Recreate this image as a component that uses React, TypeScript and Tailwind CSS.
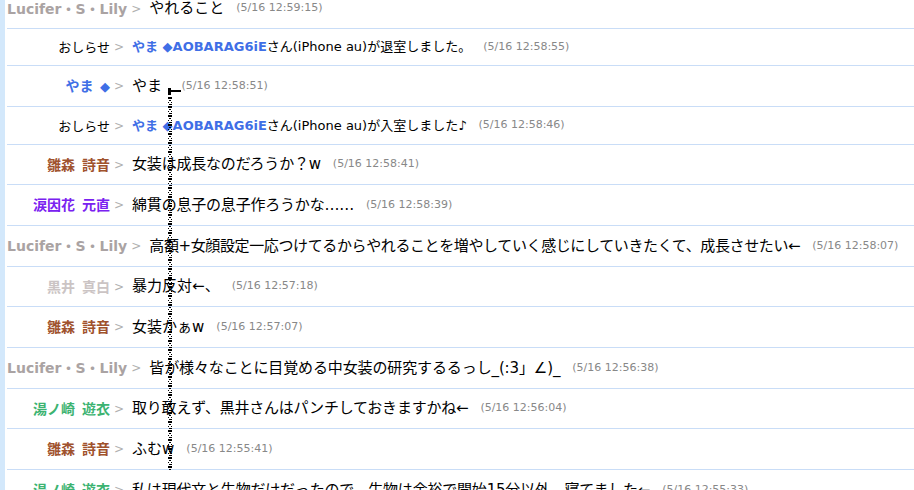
import React from "react";

type Row = {
  h: string;
  name?: string;
  nameColor?: string;
  diamond?: boolean;
  system?: "in" | "out";
  msg?: string;
  track?: string;
  time: string;
};

const rows: Row[] = [
  { h: "h-[40px]", name: "Lucifer・S・Lily", nameColor: "text-[#aaa3a3]", msg: "やれること", track: "tracking-[0px]", time: "(5/16 12:59:15)" },
  { h: "h-[37px]", system: "out", time: "(5/16 12:58:55)" },
  { h: "h-[41px]", name: "やま", nameColor: "text-[#3f6fe6]", diamond: true, msg: "やま\u2002", track: "tracking-[0px]", time: "(5/16 12:58:51)" },
  { h: "h-[38px]", system: "in", time: "(5/16 12:58:46)" },
  { h: "h-[40px]", name: "雛森\u2002詩音", nameColor: "text-[#a0522d]", msg: "女装は成長なのだろうか？w", track: "tracking-[-0.2px]", time: "(5/16 12:58:41)" },
  { h: "h-[41px]", name: "涙因花\u2002元直", nameColor: "text-[#7a22f0]", msg: "綿貫の息子の息子作ろうかな……", track: "tracking-[-0.2px]", time: "(5/16 12:58:39)" },
  { h: "h-[41px]", name: "Lucifer・S・Lily", nameColor: "text-[#aaa3a3]", msg: "高額+女顔設定一応つけてるからやれることを増やしていく感じにしていきたくて、成長させたい←", track: "tracking-[-0.38px]", time: "(5/16 12:58:07)" },
  { h: "h-[40px]", name: "黒井\u2002真白", nameColor: "text-[#cbc4c4]", msg: "暴力反対←、", track: "tracking-[0px]", time: "(5/16 12:57:18)" },
  { h: "h-[41px]", name: "雛森\u2002詩音", nameColor: "text-[#a0522d]", msg: "女装かぁw", track: "tracking-[0px]", time: "(5/16 12:57:07)" },
  { h: "h-[41px]", name: "Lucifer・S・Lily", nameColor: "text-[#aaa3a3]", msg: "皆が様々なことに目覚める中女装の研究するるっし_(:3」∠)_", track: "tracking-[-0.12px]", time: "(5/16 12:56:38)" },
  { h: "h-[40px]", name: "湯ノ崎\u2002遊衣", nameColor: "text-[#3cb371]", msg: "取り敢えず、黒井さんはパンチしておきますかね←", track: "tracking-[-0.22px]", time: "(5/16 12:56:04)" },
  { h: "h-[41px]", name: "雛森\u2002詩音", nameColor: "text-[#a0522d]", msg: "ふむw", track: "tracking-[0px]", time: "(5/16 12:55:41)" },
  { h: "h-[41px]", name: "湯ノ崎\u2002遊衣", nameColor: "text-[#3cb371]", msg: "私は現代文と生物だけだったので、生物は余裕で開始15分以外、寝てました←", track: "tracking-[-0.2px]", time: "(5/16 12:55:33)" },
];

function Glitch() {
  return (
    <svg
      className="absolute left-[162px] top-[88px]"
      width="16"
      height="382"
      viewBox="0 0 16 382"
    >
      <defs>
        <pattern id="dots" x="0" y="0" width="6" height="9" patternUnits="userSpaceOnUse">
          <rect x="1" y="0" width="4" height="2" fill="#000" />
          <rect x="2" y="3" width="2" height="1" fill="#000" />
          <rect x="1" y="5" width="1" height="1" fill="#000" />
          <rect x="4" y="5" width="1" height="1" fill="#000" />
          <rect x="2" y="7" width="3" height="1" fill="#000" />
        </pattern>
      </defs>
      <rect x="1" y="2" width="13" height="2" fill="#000" />
      <rect x="1" y="0" width="3" height="7" fill="#000" />
      <rect x="0" y="8" width="6" height="374" fill="url(#dots)" />
    </svg>
  );
}

function SystemMsg({ kind }: { kind: "in" | "out" }) {
  return (
    <span className="text-[13px] text-black whitespace-nowrap">
      <span className="font-bold text-[#3f6fe6]">やま ◆AOBARAG6iE</span>
      さん(iPhone au)が{kind === "in" ? "入室しました♪" : "退室しました。"}
    </span>
  );
}

export default function App() {
  return (
    <div className="relative h-[490px] w-[914px] overflow-hidden bg-white border-l-[5px] border-[#d3e8fb] font-['DejaVu_Sans','Noto_Sans_CJK_JP',sans-serif]">
      <div className="-mt-[11px] ml-[2px]">
        {rows.map((r, i) => (
          <div
            key={i}
            className={`${r.h} flex items-center border-b border-[#c9ddf7] whitespace-nowrap`}
          >
            <span className="min-w-[103px] text-right">
              {r.system ? (
                <span className="text-[13px] text-black">おしらせ</span>
              ) : (
                <span className={`text-[14px] font-bold ${r.nameColor}`}>
                  {r.name}
                  {r.diamond && <span className="text-[13px]">{"\u2002◆"}</span>}
                </span>
              )}
            </span>
            <span className="ml-[4px] mr-[8px] text-[12px] text-[#b0b0b0]">&gt;</span>
            {r.system ? (
              <SystemMsg kind={r.system} />
            ) : (
              <span className={`text-[15px] text-black ${r.track}`}>{r.msg}</span>
            )}
            <span className="ml-[12px] text-[11px] text-[#888888]">{r.time}</span>
          </div>
        ))}
      </div>
      <Glitch />
    </div>
  );
}
